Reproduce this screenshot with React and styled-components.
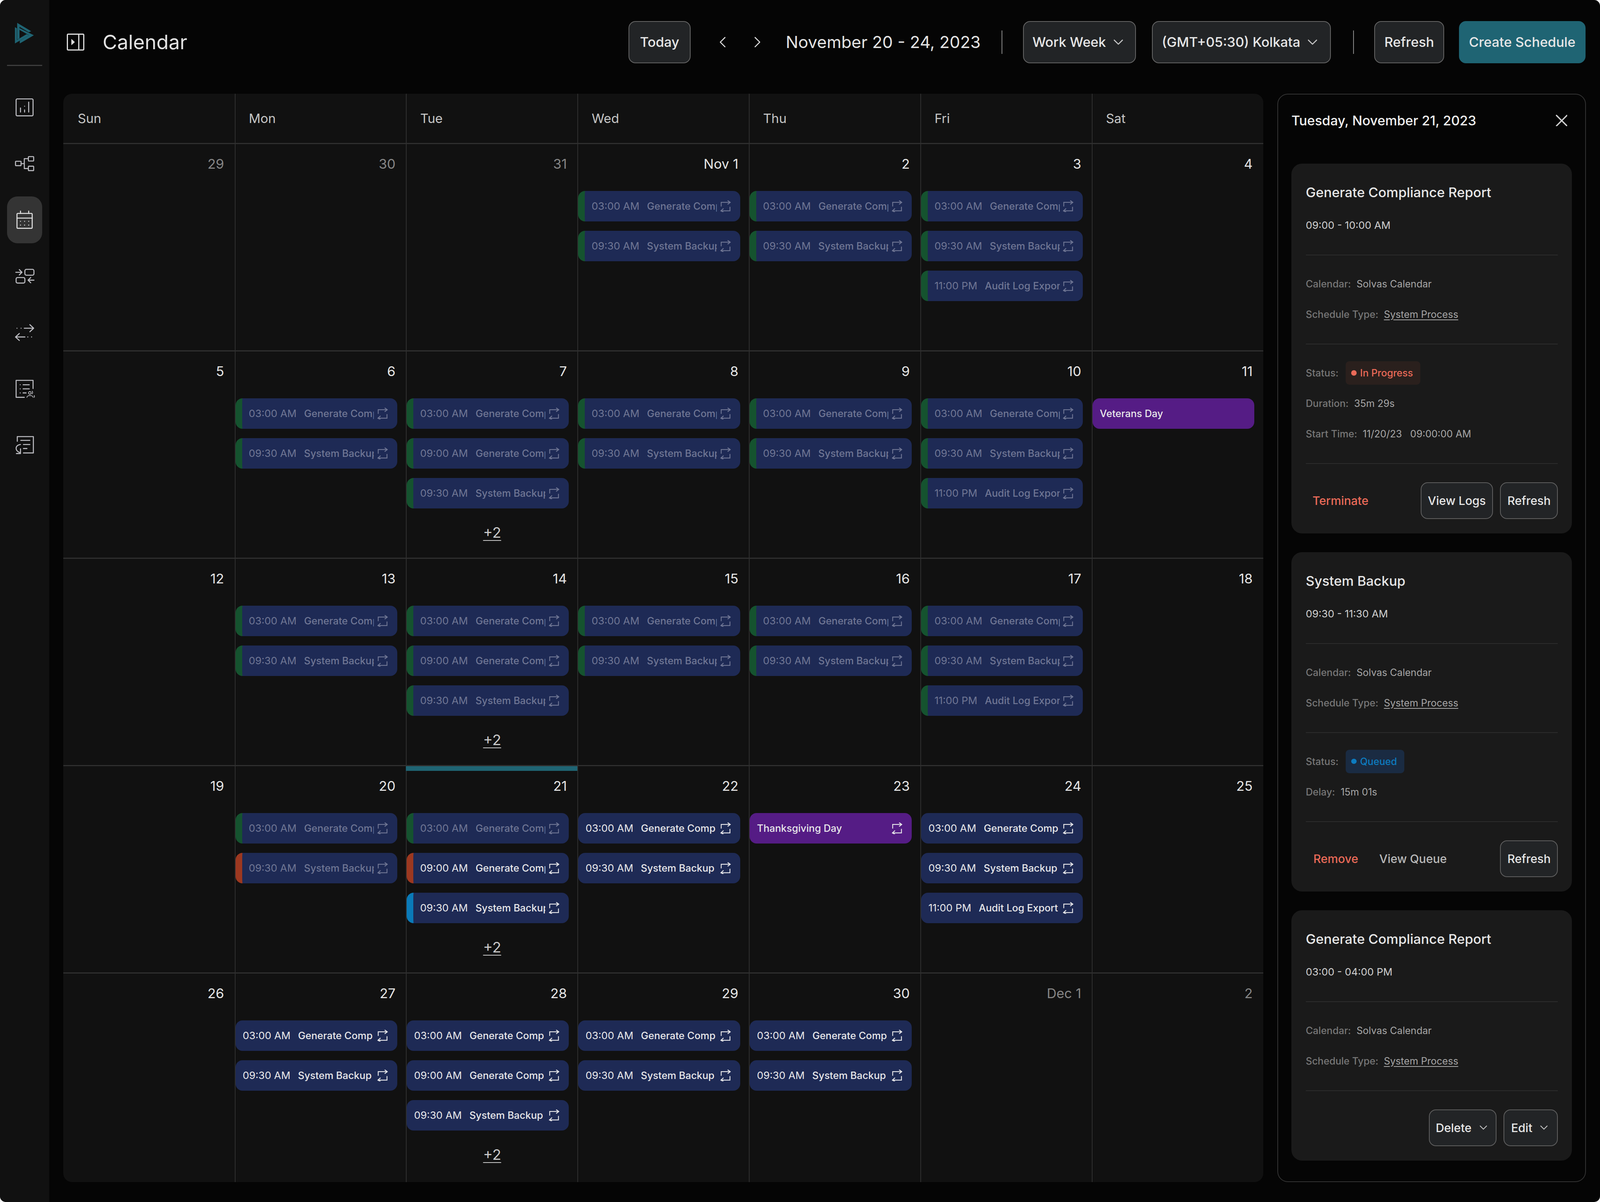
import React from 'react';
import styled, { createGlobalStyle } from 'styled-components';
import { ChevronDown, ChevronLeft, ChevronRight } from 'lucide-react';

// the reference is 5472x3078, sizes below are written in its pixels
const x = (n) => `${((n * 100) / 5472).toFixed(4)}vw`;
const y = (n) => `${((n * 100) / 3078).toFixed(4)}vh`;

const GlobalStyle = createGlobalStyle`
	html, body {
		margin: 0;
		padding: 0;
		background: #f4f4f4;
		overflow: hidden;
	}
	* {
		box-sizing: border-box;
	}
`;

const FONT = `Inter, "Liberation Sans", sans-serif`;

const Shell = styled.div`
	width: 100vw;
	height: 100vh;
	display: flex;
	border-radius: ${x(20)};
	overflow: hidden;
	background: #050505;
	font-family: ${FONT};
	color: #e6e6e6;
`;

const Sidebar = styled.nav`
	width: ${x(168)};
	flex: none;
	background: #111111;
	display: flex;
	flex-direction: column;
	align-items: center;
	padding-top: ${y(48)};
`;

const LogoBox = styled.div`
	height: ${y(75)};
	display: flex;
	align-items: center;
`;

const Logo = styled.svg`
	width: ${x(68)};
	height: ${x(75)};
`;

const SideDivider = styled.div`
	width: ${x(120)};
	height: ${y(3)};
	background: #3e3e3e;
	margin: ${y(43)} 0 ${y(46)};
`;

const NavItems = styled.div`
	display: flex;
	flex-direction: column;
	gap: ${y(24)};
`;

const NavItem = styled.div`
	width: ${x(120)};
	height: ${y(120)};
	border-radius: ${x(36)};
	display: flex;
	align-items: center;
	justify-content: center;
	background: ${(p) => (p.$active ? '#343434' : 'transparent')};
	color: ${(p) => (p.$active ? '#e0e0e0' : '#bdbdc2')};
	svg {
		width: ${x(72)};
		height: ${x(72)};
		fill: none;
		stroke: currentColor;
		stroke-width: 3.5;
		stroke-linecap: round;
		stroke-linejoin: round;
	}
`;

const Main = styled.main`
	flex: 1;
	min-width: 0;
	display: flex;
	flex-direction: column;
	padding: 0 ${x(48)} ${y(51)};
`;

const TopBar = styled.header`
	height: ${y(216)};
	margin-bottom: ${y(24)};
	flex: none;
	display: flex;
	align-items: center;
`;

const ToggleIcon = styled.svg`
	width: ${x(60)};
	height: ${x(58)};
	margin-left: ${x(12)};
	fill: none;
	stroke: #dedede;
	stroke-width: 4;
`;

const PageTitle = styled.h1`
	margin: 0 0 0 ${x(63)};
	font-size: ${x(68)};
	font-weight: 400;
	color: #e3e3e3;
`;

const Controls = styled.div`
	margin-left: auto;
	margin-right: ${x(2)};
	display: flex;
	align-items: center;
`;

const ToolButton = styled.button`
	width: ${(p) => x(p.$w)};
	height: ${y(108)};
	margin-left: ${(p) => x(p.$ml || 0)};
	border: ${x(3)} solid #646464;
	border-radius: ${x(24)};
	background: #222426;
	color: #e6e6e6;
	font-family: ${FONT};
	font-size: ${x(46)};
	font-weight: 500;
	display: flex;
	align-items: center;
	justify-content: center;
	gap: ${x(14)};
	padding: 0;
	white-space: nowrap;
`;

const PrimaryButton = styled(ToolButton)`
	background: #1f6473;
	border-color: #1f6473;
`;

const ArrowButton = styled.div`
	width: ${x(60)};
	height: ${x(64)};
	margin-left: ${(p) => x(p.$ml)};
	display: flex;
	align-items: center;
	justify-content: center;
	color: #e0e0e0;
	svg {
		width: ${x(64)};
		height: ${x(64)};
		flex: none;
	}
`;

const DropChevron = styled(ChevronDown)`
	width: ${(p) => x(p.$s || 56)};
	height: ${(p) => x(p.$s || 56)};
	color: #c8c8c8;
	flex: none;
`;

const RangeLabel = styled.div`
	width: ${x(663)};
	margin-left: ${x(67)};
	font-size: ${x(57)};
	font-weight: 400;
	color: #e3e3e3;
	white-space: nowrap;
`;

const BarSeparator = styled.div`
	width: ${x(3)};
	height: ${y(60)};
	background: #8a8a8a;
	margin-left: ${(p) => x(p.$ml)};
`;

const Content = styled.div`
	flex: 1;
	min-height: 0;
	display: flex;
	gap: ${x(49)};
`;

const CalendarGrid = styled.section`
	flex: 1;
	min-width: 0;
	display: grid;
	grid-template-columns: repeat(7, minmax(0, 1fr));
	grid-template-rows: ${y(126)} repeat(4, ${y(531)}) minmax(0, 1fr);
	background: #111111;
	border-radius: ${x(30)};
	overflow: hidden;
`;

const DayHead = styled.div`
	display: flex;
	align-items: center;
	padding-left: ${(p) => x(p.$first ? 50 : 46)};
	border-left: ${(p) => (p.$first ? 'none' : `${x(3)} solid #2f2f2f`)};
	font-size: ${x(44)};
	color: #c6c6c6;
`;

const DayCell = styled.div`
	position: relative;
	min-width: 0;
	border-top: ${y(3)} solid #2f2f2f;
	border-left: ${(p) => (p.$first ? 'none' : `${x(3)} solid #2f2f2f`)};
	padding-top: ${y(21)};
`;

const TodayBar = styled.div`
	position: absolute;
	top: 0;
	left: -${x(3)};
	right: 0;
	height: ${y(12)};
	background: #1f6473;
`;

const DateNum = styled.div`
	height: ${y(60)};
	line-height: ${y(60)};
	padding-right: ${x(36)};
	text-align: right;
	font-size: ${x(46)};
	color: ${(p) => (p.$muted ? '#858585' : '#e6e6e6')};
`;

const EventList = styled.div`
	margin: ${y(39)} ${x(30)} 0 0;
	display: flex;
	flex-direction: column;
	gap: ${y(24)};
`;

const EventPill = styled.div`
	height: ${y(78)};
	border-radius: ${x(24)};
	display: flex;
	align-items: center;
	background: ${(p) => (p.$holiday ? '#551c85' : '#1e2a55')};
	border-left: ${(p) => (p.$stripe ? `${x(24)} solid ${p.$stripe}` : 'none')};
	padding: 0 ${x(31)} 0 ${(p) => x(p.$stripe ? 23 : 25)};
	color: ${(p) => (p.$dim ? '#6f7694' : '#e8e8ea')};
	font-size: ${x(34)};
`;

const EventTime = styled.span`
	flex: none;
	margin-right: ${x(26)};
	font-size: ${x(35)};
	font-weight: 400;
`;

const EventName = styled.span`
	flex: 1;
	min-width: 0;
	overflow: hidden;
	white-space: nowrap;
	font-weight: 500;
	margin-right: ${x(12)};
`;

const RepeatMark = styled.svg`
	flex: none;
	width: ${x(37)};
	height: ${x(41)};
	fill: none;
	stroke: currentColor;
	stroke-width: 3;
`;

const MoreLink = styled.div`
	margin: ${y(13)} ${x(-30)} 0 0;
	height: ${y(50)};
	line-height: ${y(50)};
	text-align: center;
	font-size: ${x(50)};
	color: #c9c9c9;
	text-decoration: underline;
	text-underline-offset: 15%;
	text-decoration-thickness: ${x(3)};
`;

const Panel = styled.aside`
	width: ${x(1055)};
	flex: none;
	border: ${x(3)} solid #333333;
	border-radius: ${x(36)};
	padding: 0 ${x(45)};
	display: flex;
	flex-direction: column;
`;

const PanelHead = styled.div`
	height: ${y(177)};
	padding: 0 ${x(16)} ${y(44)} ${x(0)};
	display: flex;
	align-items: center;
	justify-content: space-between;
	font-size: ${x(45.5)};
	font-weight: 500;
	color: #efefef;
	flex: none;
`;

const CloseIcon = styled.svg`
	width: ${x(40)};
	height: ${x(40)};
	stroke: #cfcfcf;
	stroke-width: 4.5;
	stroke-linecap: round;
`;

const Cards = styled.div`
	display: flex;
	flex-direction: column;
	gap: ${y(48)};
`;

const Card = styled.article`
	background: #1a1a1a;
	border-radius: ${x(36)};
	padding: ${y(44)} ${x(48)} ${y(37)} ${x(49)};
`;

const CardTitle = styled.h3`
	margin: 0;
	height: ${y(60)};
	line-height: ${y(60)};
	font-size: ${x(46)};
	font-weight: 500;
	color: #e6e6e6;
`;

const CardTime = styled.div`
	margin: ${y(24)} 0 ${y(45)};
	height: ${y(60)};
	line-height: ${y(60)};
	font-size: ${x(35)};
	color: #cfcfcf;
`;

const Section = styled.div`
	border-top: ${y(2)} solid #2c2c2c;
	padding: ${y(43)} 0 ${y(45)};
	display: flex;
	flex-direction: column;
	gap: ${y(18)};
`;

const InfoRow = styled.div`
	height: ${y(60)};
	display: flex;
	align-items: center;
	font-size: ${x(33.5)};
	gap: ${(p) => x(p.$gap || 19)};
	color: #a6a6a6;
`;

const InfoLabel = styled.span`
	font-weight: 500;
	color: #777777;
`;

const InfoLink = styled.span`
	text-decoration: underline;
	text-underline-offset: 15%;
`;

const StatusBadge = styled.span`
	height: ${y(60)};
	display: inline-flex;
	align-items: center;
	gap: ${x(12)};
	padding: 0 ${x(25)} 0 ${x(19)};
	border-radius: ${x(12)};
	font-weight: 500;
	background: ${(p) => p.$bg};
	color: ${(p) => p.$color};
`;

const StatusDot = styled.i`
	width: ${x(18)};
	height: ${x(18)};
	border-radius: 50%;
	background: currentColor;
`;

const CardActions = styled.div`
	border-top: ${y(2)} solid #2c2c2c;
	padding-top: ${y(47)};
	display: flex;
	align-items: center;
	justify-content: flex-end;
	gap: ${x(24)};
`;

const TextAction = styled.span`
	font-size: ${x(40)};
	font-weight: 500;
	color: ${(p) => (p.$danger ? '#ea6a58' : '#b8b8b8')};
	margin-left: ${(p) => x(p.$ml || 0)};
`;

const CardButton = styled.button`
	width: ${(p) => x(p.$w)};
	height: ${y(94)};
	border: ${x(3)} solid #5e5e5e;
	border-radius: ${x(24)};
	background: #222426;
	color: #e6e6e6;
	font-family: ${FONT};
	font-size: ${x(40)};
	font-weight: 500;
	display: flex;
	align-items: center;
	justify-content: center;
	gap: ${x(18)};
	padding: 0;
`;

const Spacer = styled.div`
	flex: 1;
`;

const icons = [
	<svg viewBox="0 0 72 72" key="a">
		<rect x="7" y="7" width="58" height="58" rx="4" />
		<path d="M22 38v14M36 45v7M36 32v.1M50 18v34" />
	</svg>,
	<svg viewBox="0 0 72 72" key="b">
		<rect x="5" y="28" width="19" height="15" rx="2" />
		<rect x="49" y="12" width="18" height="15" rx="2" />
		<rect x="49" y="45" width="18" height="15" rx="2" />
		<path d="M24 36h11M49 19H35v34h14" />
	</svg>,
	<svg viewBox="0 0 72 72" key="c">
		<rect x="10" y="14" width="52" height="51" rx="3" />
		<path d="M10 30h52M22 6v8M50 6v8M22 41v.1M36 41v.1M50 41v.1M22 54v.1M36 54v.1M50 54v.1" />
	</svg>,
	<svg viewBox="0 0 72 72" key="d">
		<rect x="37" y="13" width="31" height="20" rx="5" />
		<rect x="7" y="41" width="30" height="19" rx="5" />
		<path d="M6 23h21M18 14l9 9-9 9M68 50H48M57 41l-9 9 9 9" />
	</svg>,
	<svg viewBox="0 0 72 72" key="e">
		<path d="M35 22h32M54 10l13 12-13 12M37 52H5M18 40 5 52l13 12M10 22v.1M24 22v.1M47 52v.1M60 52v.1" />
	</svg>,
	<svg viewBox="0 0 72 72" key="f">
		<path d="M65 36V8H7v58h28M21 23v.1M31 23h21M21 37v.1M31 37h21M21 51v.1M31 51h10" />
		<circle cx="54" cy="51" r="4.5" strokeWidth="2.5" />
		<path d="M44 66c0-8 21-8 21 0M62 45c2 3 2 6 0 9M69 60c1 2 1 4 0 6" strokeWidth="2.5" />
	</svg>,
	<svg viewBox="0 0 72 72" key="g">
		<path d="M11 24V8h55v56H32M23 21h31M32 35h22M32 49h12M22 35C12 36 7 42 7 48c0 7 6 12 13 15M22 50v16H8" />
	</svg>,
];

const repeatIcon = (
	<RepeatMark viewBox="0 0 37 41">
		<path d="M3 21V7h31M25 0.5 34 7l-9 7" />
		<path d="M33 22v14H2M11 28l-9 8 9 4.5" />
	</RepeatMark>
);

// event shorthands: [time, name], the long name is cut in the pill as in the app
const GEN3 = ['03:00 AM', 'Generate Comp'];
const GEN9 = ['09:00 AM', 'Generate Comp'];
const SYS = ['09:30 AM', 'System Backup'];
const AUD = ['11:00 PM', 'Audit Log Export'];
const GREEN = '#15532f';
const RED = '#9c3820';
const BLUE = '#0a7ab8';

const past = (list) => list.map(([time, name]) => ({ time, name, stripe: GREEN, dim: true }));
const next = (list) => list.map(([time, name]) => ({ time, name }));

const weeks = [
	[
		{ d: '29', muted: true },
		{ d: '30', muted: true },
		{ d: '31', muted: true },
		{ d: 'Nov 1', events: past([GEN3, SYS]) },
		{ d: '2', events: past([GEN3, SYS]) },
		{ d: '3', events: past([GEN3, SYS, AUD]) },
		{ d: '4' },
	],
	[
		{ d: '5' },
		{ d: '6', events: past([GEN3, SYS]) },
		{ d: '7', events: past([GEN3, GEN9, SYS]), more: true },
		{ d: '8', events: past([GEN3, SYS]) },
		{ d: '9', events: past([GEN3, SYS]) },
		{ d: '10', events: past([GEN3, SYS, AUD]) },
		{ d: '11', events: [{ name: 'Veterans Day', holiday: true }] },
	],
	[
		{ d: '12' },
		{ d: '13', events: past([GEN3, SYS]) },
		{ d: '14', events: past([GEN3, GEN9, SYS]), more: true },
		{ d: '15', events: past([GEN3, SYS]) },
		{ d: '16', events: past([GEN3, SYS]) },
		{ d: '17', events: past([GEN3, SYS, AUD]) },
		{ d: '18' },
	],
	[
		{ d: '19' },
		{
			d: '20',
			events: [
				{ time: GEN3[0], name: GEN3[1], stripe: GREEN, dim: true },
				{ time: SYS[0], name: SYS[1], stripe: RED, dim: true },
			],
		},
		{
			d: '21',
			today: true,
			more: true,
			events: [
				{ time: GEN3[0], name: GEN3[1], stripe: GREEN, dim: true },
				{ time: GEN9[0], name: GEN9[1], stripe: RED },
				{ time: SYS[0], name: SYS[1], stripe: BLUE },
			],
		},
		{ d: '22', events: next([GEN3, SYS]) },
		{ d: '23', events: [{ name: 'Thanksgiving Day', holiday: true, repeat: true }] },
		{ d: '24', events: next([GEN3, SYS, AUD]) },
		{ d: '25' },
	],
	[
		{ d: '26' },
		{ d: '27', events: next([GEN3, SYS]) },
		{ d: '28', events: next([GEN3, GEN9, SYS]), more: true },
		{ d: '29', events: next([GEN3, SYS]) },
		{ d: '30', events: next([GEN3, SYS]) },
		{ d: 'Dec 1', muted: true },
		{ d: '2', muted: true },
	],
];

const DAYS = ['Sun', 'Mon', 'Tue', 'Wed', 'Thu', 'Fri', 'Sat'];

function CalendarEvent({ ev }) {
	if (ev.holiday) {
		return (
			<EventPill $holiday>
				<EventName>{ev.name}</EventName>
				{ev.repeat && repeatIcon}
			</EventPill>
		);
	}
	return (
		<EventPill $stripe={ev.stripe} $dim={ev.dim}>
			<EventTime>{ev.time}</EventTime>
			<EventName>{ev.name}</EventName>
			{repeatIcon}
		</EventPill>
	);
}

function Info({ label, children, gap }) {
	return (
		<InfoRow $gap={gap}>
			<InfoLabel>{label}</InfoLabel>
			{children}
		</InfoRow>
	);
}

function CardHead({ title, time }) {
	return (
		<>
			<CardTitle>{title}</CardTitle>
			<CardTime>{time}</CardTime>
			<Section>
				<Info label="Calendar:">Solvas Calendar</Info>
				<Info label="Schedule Type:"><InfoLink>System Process</InfoLink></Info>
			</Section>
		</>
	);
}

export default function App() {
	return (
		<>
			<GlobalStyle />
			<Shell>
				<Sidebar>
					<LogoBox>
						<Logo viewBox="60 50 205 225">
							<g fill="#1f6473">
								<polygon points="88,55 233,142 207,152 112,97 112,215 88,228" />
								<polygon points="65,100 85,112 85,232 185,172 212,183 65,268" />
								<polygon points="112,110 260,183 115,268 115,240 212,183 112,128" />
							</g>
						</Logo>
					</LogoBox>
					<SideDivider />
					<NavItems>
						{icons.map((icon, i) => (
							<NavItem key={i} $active={i === 2}>{icon}</NavItem>
						))}
					</NavItems>
				</Sidebar>
				<Main>
					<TopBar>
						<ToggleIcon viewBox="0 0 60 58">
							<rect x="2" y="2" width="56" height="54" rx="3" />
							<path d="M41 2v54" />
							<path d="M16 19l11 10-11 10z" fill="#dedede" strokeWidth="1" />
						</ToggleIcon>
						<PageTitle>Calendar</PageTitle>
						<Controls>
							<ToolButton $w={213}>Today</ToolButton>
							<ArrowButton $ml={79}><ChevronLeft strokeWidth={1.3} /></ArrowButton>
							<ArrowButton $ml={59}><ChevronRight strokeWidth={1.3} /></ArrowButton>
							<RangeLabel>November 20 - 24, 2023</RangeLabel>
							<BarSeparator $ml={75} />
							<ToolButton $w={387} $ml={70}>Work Week<DropChevron strokeWidth={1.5} /></ToolButton>
							<ToolButton $w={612} $ml={54}>(GMT+05:30) Kolkata<DropChevron strokeWidth={1.5} /></ToolButton>
							<BarSeparator $ml={76} />
							<ToolButton $w={239} $ml={70}>Refresh</ToolButton>
							<PrimaryButton $w={432} $ml={51}>Create Schedule</PrimaryButton>
						</Controls>
					</TopBar>
					<Content>
						<CalendarGrid>
							{DAYS.map((day, i) => (
								<DayHead key={day} $first={i === 0}>{day}</DayHead>
							))}
							{weeks.map((week) =>
								week.map((cell, i) => (
									<DayCell key={`${cell.d}-${i}`} $first={i === 0}>
										{cell.today && <TodayBar />}
										<DateNum $muted={cell.muted}>{cell.d}</DateNum>
										{cell.events && (
											<EventList>
												{cell.events.map((ev, n) => (
													<CalendarEvent key={n} ev={ev} />
												))}
												{cell.more && <MoreLink>+2</MoreLink>}
											</EventList>
										)}
									</DayCell>
								))
							)}
						</CalendarGrid>
						<Panel>
							<PanelHead>
								Tuesday, November 21, 2023
								<CloseIcon viewBox="0 0 40 40"><path d="M2 2l36 36M38 2L2 38" /></CloseIcon>
							</PanelHead>
							<Cards>
								<Card>
									<CardHead title="Generate Compliance Report" time="09:00 - 10:00 AM" />
									<Section>
										<Info label="Status:" gap={25}>
											<StatusBadge $bg="#2a201d" $color="#ea6a58"><StatusDot />In Progress</StatusBadge>
										</Info>
										<Info label="Duration:">35m 29s</Info>
										<Info label="Start Time:">11/20/23&nbsp;&nbsp;&nbsp;09:00:00 AM</Info>
									</Section>
									<CardActions>
										<TextAction $danger $ml={23}>Terminate</TextAction>
										<Spacer />
										<CardButton $w={248}>View Logs</CardButton>
										<CardButton $w={198}>Refresh</CardButton>
									</CardActions>
								</Card>
								<Card>
									<CardHead title="System Backup" time="09:30 - 11:30 AM" />
									<Section>
										<Info label="Status:" gap={25}>
											<StatusBadge $bg="#1a2b42" $color="#0d7cc0"><StatusDot />Queued</StatusBadge>
										</Info>
										<Info label="Delay:">15m 01s</Info>
									</Section>
									<CardActions>
										<TextAction $danger $ml={26}>Remove</TextAction>
										<TextAction $ml={48}>View Queue</TextAction>
										<Spacer />
										<CardButton $w={198}>Refresh</CardButton>
									</CardActions>
								</Card>
								<Card>
									<CardHead title="Generate Compliance Report" time="03:00 - 04:00 PM" />
									<CardActions>
										<CardButton $w={232}>Delete<DropChevron $s={44} strokeWidth={1.5} /></CardButton>
										<CardButton $w={186}>Edit<DropChevron $s={44} strokeWidth={1.5} /></CardButton>
									</CardActions>
								</Card>
							</Cards>
						</Panel>
					</Content>
				</Main>
			</Shell>
		</>
	);
}
